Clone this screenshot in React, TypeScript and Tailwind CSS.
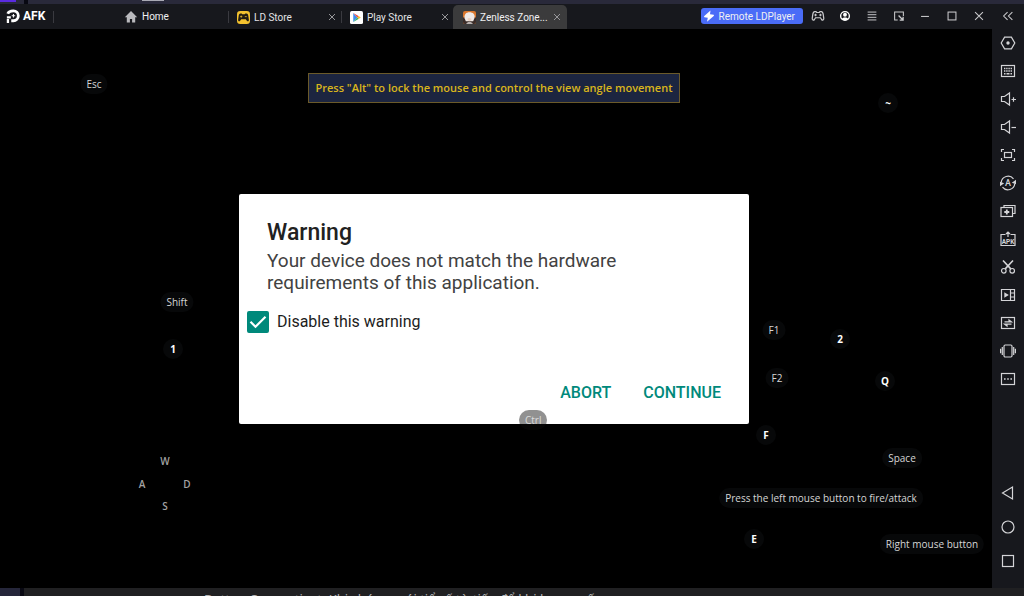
import { useState } from 'react';
import type { ReactNode } from 'react';

type MappedKey = { label: string; x: number; y: number; kind: 'letter' | 'word' | 'move' };

// Key map is authored against this canvas size
const CANVAS_W = 992;
const CANVAS_H = 559;

const KEYS: MappedKey[] = [
  { label: 'Esc', x: 94, y: 55, kind: 'word' },
  { label: '~', x: 888, y: 74, kind: 'letter' },
  { label: 'Shift', x: 177, y: 273, kind: 'word' },
  { label: '1', x: 173, y: 320, kind: 'letter' },
  { label: 'F1', x: 774, y: 301, kind: 'word' },
  { label: '2', x: 840, y: 310, kind: 'letter' },
  { label: 'F2', x: 777, y: 349, kind: 'word' },
  { label: 'Q', x: 885, y: 352, kind: 'letter' },
  { label: 'F', x: 766, y: 406, kind: 'letter' },
  { label: 'Space', x: 902, y: 429, kind: 'word' },
  { label: 'Press the left mouse button to fire/attack', x: 821, y: 469, kind: 'word' },
  { label: 'E', x: 754, y: 510, kind: 'letter' },
  { label: 'Right mouse button', x: 932, y: 515, kind: 'word' },
  { label: 'W', x: 165, y: 432, kind: 'move' },
  { label: 'A', x: 142, y: 455, kind: 'move' },
  { label: 'D', x: 187, y: 455, kind: 'move' },
  { label: 'S', x: 165, y: 477, kind: 'move' },
];

const KEY_STYLES: Record<MappedKey['kind'], string> = {
  letter: 'min-w-5 bg-[#070809] font-bold text-white',
  word: 'px-1.5 bg-[#070809] text-[#d6d6d6]',
  move: 'font-semibold text-[#a3a3a3]',
};

function Icon({ children, className = 'size-4' }: { children: ReactNode; className?: string }) {
  return (
    <svg viewBox="0 0 16 16" fill="none" stroke="currentColor" strokeWidth={1.2} className={className} aria-hidden="true">
      {children}
    </svg>
  );
}

const SPEAKER = 'M1.5 5.5h3L9.5 2v12L4.5 10.5h-3z';

const TOOLS: { name: string; icon: ReactNode }[] = [
  {
    name: 'Settings',
    icon: (
      <>
        <path d="M4.6 2.2h6.8L14.8 8l-3.4 5.8H4.6L1.2 8z" />
        <circle cx="8" cy="8" r="1.7" fill="currentColor" stroke="none" />
      </>
    ),
  },
  {
    name: 'Keyboard mapping',
    icon: (
      <>
        <rect x="1.5" y="2.5" width="13" height="11" />
        <path d="M4 5.5h8M4 8h8" strokeWidth="1.5" strokeDasharray="1.4 0.8" />
        <path d="M4 10.8h1.5M6.5 10.8h3M10.5 10.8H12" strokeWidth="1.4" />
      </>
    ),
  },
  { name: 'Volume up', icon: <><path d={SPEAKER} /><path d="M11.5 8.5H16M13.5 6.3v4.4" /></> },
  { name: 'Volume down', icon: <><path d={SPEAKER} /><path d="M11.5 8.5H16" /></> },
  {
    name: 'Full screen',
    icon: (
      <>
        <path d="M1.5 5V2.5H4M12 2.5h2.5V5M14.5 11v2.5H12M4 13.5H1.5V11" />
        <rect x="4.5" y="5.5" width="7" height="5" />
      </>
    ),
  },
  {
    name: 'Auto rotate',
    icon: (
      <>
        <path d="M1.2 7.5A6.9 6.9 0 0 1 13.5 3.9M14.8 8.5A6.9 6.9 0 0 1 2.5 12.1" />
        <path d="M16 4.8v4.4l-4.2-1.4zM0 11.200V6.800l4.200 1.400z" fill="currentColor" stroke="none" />
        <text x="8" y="11" textAnchor="middle" fontSize="9" fontWeight="500" fill="currentColor" stroke="none">
          A
        </text>
      </>
    ),
  },
  {
    name: 'Multi instance',
    icon: (
      <>
        <path d="M4 4V2.5h11v8h-2" />
        <rect x="1" y="4.5" width="11.5" height="9" />
        <path d="M6.8 6.5v5M4.3 9h5" strokeWidth="1.8" />
      </>
    ),
  },
  {
    name: 'Install APK',
    icon: (
      <>
        <path d="M5.5 3.5H1v11h14v-11h-4.5" />
        <path d="M8 6V1.5M6 3l2-2 2 2" />
        <text x="8" y="12.8" textAnchor="middle" fontSize="6.5" fontWeight="700" fill="currentColor" stroke="none">
          APK
        </text>
      </>
    ),
  },
  {
    name: 'Screenshot',
    icon: (
      <>
        <circle cx="3.8" cy="11.8" r="2.3" />
        <circle cx="12.2" cy="11.8" r="2.3" />
        <path d="M3 1.5l7.8 8.4M13 1.5 5.2 9.9" strokeWidth="1.6" />
      </>
    ),
  },
  {
    name: 'Video recorder',
    icon: (
      <>
        <path d="M1.5 2.5h13v11h-13zM10.5 2.5v11M10.5 6h4M10.5 10h4" />
        <path d="M4.3 5.3v5.4L8.8 8z" fill="currentColor" stroke="none" />
      </>
    ),
  },
  {
    name: 'Synchronizer',
    icon: (
      <>
        <rect x="1.5" y="2.5" width="13" height="11" />
        <path d="M4.5 6.8h7L9 4.9v1.9M11.5 9.2h-7L7 11.1V9.2" fill="currentColor" />
      </>
    ),
  },
  {
    name: 'Shake',
    icon: (
      <>
        <rect x="4" y="2" width="8" height="12" rx="1.2" />
        <path d="M2.3 4v8M13.7 4v8M.6 5.8v4.4M15.4 5.8v4.4" />
      </>
    ),
  },
  {
    name: 'More',
    icon: (
      <>
        <rect x="1.5" y="2.5" width="13" height="11" />
        <path d="M4 8h1.6M7.2 8h1.6M10.4 8H12" strokeWidth="1.6" />
      </>
    ),
  },
];

const NAV: { name: string; icon: ReactNode }[] = [
  { name: 'Back', icon: <path d="M12.5 2v12L2.5 8z" /> },
  { name: 'Home screen', icon: <circle cx="8" cy="8" r="6" /> },
  { name: 'Recent apps', icon: <rect x="2.5" y="2.5" width="11" height="11" /> },
];

const PAD_BODY =
  'M4.2 3h1.6l.7 1h3l.7-1h1.6c1.3 0 1.9 1 2.2 3.5l.6 4.2c.2 1.8-1.4 2.7-2.5 1.3L10.8 10H5.2L3.9 12C2.8 13.4 1.2 12.5 1.4 10.7L2 6.5C2.3 4 2.9 3 4.2 3z';

const WINDOW_BUTTONS: { name: string; icon: ReactNode }[] = [
  {
    name: 'Gamepad',
    icon: (
      <>
        <path d={PAD_BODY} strokeWidth="1.4" />
        <path d="M5.2 5.4v3M3.7 6.9h3M9.3 6.9h3M10.8 5.4v3" />
      </>
    ),
  },
  {
    name: 'Account',
    icon: (
      <>
        <circle cx="8" cy="8" r="5" strokeWidth="1.6" stroke="#fff" />
        <circle cx="8" cy="6.6" r="2.2" fill="#fff" stroke="none" />
        <path d="M4.2 11.4c.8-2.4 6.8-2.4 7.6 0-2 2-5.6 2-7.6 0z" fill="#fff" stroke="none" />
      </>
    ),
  },
  { name: 'Menu', icon: <path d="M3 3.5h10M3 6.5h10M3 9.5h10M3 12.5h10" strokeWidth="1.1" /> },
  {
    name: 'Mini window',
    icon: (
      <>
        <path d="M6.5 12.5H3v-9h10V8" />
        <path d="M7.5 7.5l5 5M12.7 8.8v3.9H8.8" strokeWidth="1.5" />
      </>
    ),
  },
  { name: 'Minimize', icon: <path d="M3.5 8.5h9" /> },
  { name: 'Maximize', icon: <rect x="3.5" y="3.5" width="9" height="9" /> },
  { name: 'Close', icon: <path d="M3.5 3.5l9 9M12.5 3.5l-9 9" /> },
];

function HomeIcon() {
  return (
    <svg viewBox="0 0 14 14" className="size-3.5" fill="#b9b9bd" aria-hidden="true">
      <path d="M7 1 .8 7.3h2v5.2h3.1V9h2.2v3.5h3.1V7.3h2z" />
    </svg>
  );
}

function LdStoreIcon() {
  return (
    <svg viewBox="0 0 16 16" className="size-[13px]" aria-hidden="true">
      <rect width="16" height="16" rx="4" fill="#f4c22f" />
      <path d={PAD_BODY} fill="#221c12" />
      <path d="M5.2 5.6v2.6M3.9 6.9h2.6M9.6 6.9H12" stroke="#f4c22f" strokeWidth="0.9" />
    </svg>
  );
}

function PlayStoreIcon() {
  return (
    <svg viewBox="0 0 16 16" className="size-[13px]" aria-hidden="true">
      <rect width="16" height="16" rx="2" fill="#fff" />
      <path d="M4 2.5v11L9 8z" fill="#3f8ff0" />
      <path d="M4 2.5l7 4L9 8z" fill="#e94a45" />
      <path d="M4 13.5l7-4L9 8z" fill="#30b367" />
      <path d="M10.6 6.3 13.3 8l-2.7 1.7L9 8z" fill="#f6bd2c" />
    </svg>
  );
}

function ZenlessIcon() {
  return (
    <svg viewBox="0 0 16 16" className="size-[13px]" aria-hidden="true">
      <rect width="16" height="16" rx="2.5" fill="#d9762c" />
      <path d="M0 8h16v5.5a2.5 2.5 0 0 1-2.5 2.5h-11A2.5 2.5 0 0 1 0 13.5z" fill="#3a2c29" />
      <path d="M2 9C1 4 4 1.5 8 1.5S15.500 4 14 9l-1.500 3.500h-9z" fill="#efe9e6" />
      <path d="M5.500 9.500l1.700-1 1.600.5 1.700.5-.6 1.800L8 12.500l-2-1.200z" fill="#ecd0c0" />
      <path d="M4 16c.5-2 2-2.500 4-2.500s3.500.5 4 2.500z" fill="#b9b2b0" />
    </svg>
  );
}

function Tab({ label, icon, active = false }: { label: string; icon: ReactNode; active?: boolean }) {
  return (
    <div
      className={`flex shrink-0 items-center ${
        active ? '-ml-0.5 w-[114px] rounded-t-[5px] bg-[#3b3b3c] pl-2.5' : 'w-[113px] pl-2 text-[#e3e3e5]'
      }`}
    >
      <button className="flex flex-1 items-center gap-1 whitespace-nowrap">
        {icon}
        {label}
      </button>
      <button aria-label={`Close ${label}`} className="mr-1 text-[#9a9a9d]">
        <Icon className="size-3">
          <path d="M4 4l8 8M12 4l-8 8" strokeWidth="1.3" />
        </Icon>
      </button>
    </div>
  );
}

function Divider() {
  return <span className="-ml-px h-3 w-px self-center bg-[#3a3a40]" />;
}

function TitleBar() {
  return (
    <header className="flex h-[25px] shrink-0 bg-[#17181d] text-[10px] text-[#f0f0f2]">
      <div className="flex w-[54px] shrink-0 items-center gap-[3px] pb-px pl-1.5 text-xs font-bold text-white">
        <svg viewBox="0 0 16 16" className="size-3.5" fill="none" stroke="#fff" aria-hidden="true">
          <path d="M2 5.5C3 3 5.5 2.2 8.5 2.2a5.6 5.6 0 0 1 0 11.2H6" strokeWidth="3.2" />
          <path d="M1 9.5h4.5M2.2 11.5V16" strokeWidth="2.6" />
          <path d="M6.5 7.8h4M8.5 5.8v4" strokeWidth="1.2" />
        </svg>
        AFK
      </div>
      <Divider />
      <button className="flex w-[175px] shrink-0 items-center gap-1 pl-[70px]">
        <HomeIcon />
        Home
      </button>
      <Divider />
      <div className="flex pt-px">
        <Tab label="LD Store" icon={<LdStoreIcon />} />
        <Divider />
        <Tab label="Play Store" icon={<PlayStoreIcon />} />
        <Tab label="Zenless Zone..." icon={<ZenlessIcon />} active />
      </div>
      <div className="ml-auto flex items-center pb-px">
        <button className="mr-0.5 flex h-4 items-center gap-1 rounded-[3px] bg-[#4a6cf7] pr-2 pl-0.5 whitespace-nowrap">
          <svg viewBox="0 0 12 12" className="size-3" fill="#fff" aria-hidden="true">
            <path d="M7.5.5 1 6.2l.3 1 3.5.6-.8 4 7-6-.3-1-3.700-.5z" />
          </svg>
          Remote LDPlayer
        </button>
        <div className="flex w-[187px]">
          {WINDOW_BUTTONS.map((b) => (
            <button key={b.name} aria-label={b.name} className="flex flex-1 justify-center text-[#c9c9cc]">
              <Icon className="size-3.5">{b.icon}</Icon>
            </button>
          ))}
        </div>
        <button aria-label="Collapse sidebar" className="flex w-8 justify-center text-[#c9c9cc]">
          <Icon className="size-3.5">
            <path d="M7.5 3.5 3 8l4.5 4.5M13 3.5 8.5 8l4.5 4.5" />
          </Icon>
        </button>
      </div>
    </header>
  );
}

function Sidebar() {
  return (
    <aside className="flex w-8 shrink-0 flex-col bg-[#17181d] pb-2.5 text-[#d4d4d7]">
      {TOOLS.map((t) => (
        <button key={t.name} aria-label={t.name} className="flex h-7 items-center justify-center">
          <Icon>{t.icon}</Icon>
        </button>
      ))}
      <div className="mt-auto flex flex-col">
        {NAV.map((n) => (
          <button key={n.name} aria-label={n.name} className="flex h-[34px] items-center justify-center">
            <Icon>{n.icon}</Icon>
          </button>
        ))}
      </div>
    </aside>
  );
}

function WarningDialog() {
  const [disabled, setDisabled] = useState(true);

  return (
    <section
      role="dialog"
      aria-labelledby="warning-title"
      className="relative flex min-h-[230px] w-[510px] flex-col rounded-[2px] bg-white pt-[25px] pb-[15px]"
    >
      <h1 id="warning-title" className="px-7 text-[23px] leading-7 font-medium text-[#212121]">
        Warning
      </h1>
      <p className="mt-[3px] pr-24 pl-7 text-[19px] leading-[22px] text-[#424242]">
        Your device does not match the hardware requirements of this application.
      </p>
      <label className="mt-4 flex items-center gap-2 self-start pl-2 text-base leading-6 text-[#1d1d1d]">
        <span className="grid size-[22px]">
          <input
            type="checkbox"
            checked={disabled}
            onChange={(e) => setDisabled(e.target.checked)}
            className="col-start-1 row-start-1 appearance-none rounded-[2px] border-2 border-[#00897b] checked:bg-[#00897b]"
          />
          {disabled && (
            <svg viewBox="0 0 22 22" className="pointer-events-none col-start-1 row-start-1" fill="none" stroke="#fff" strokeWidth="2.2" aria-hidden="true">
              <path d="M3.5 10.8l5 5 10-10" />
            </svg>
          )}
        </span>
        Disable this warning
      </label>
      <div className="mt-auto flex justify-end gap-8 pr-7 text-base leading-8 font-medium text-[#00897b]">
        <button>ABORT</button>
        <button>CONTINUE</button>
      </div>
      {/* Mapped key that sits over the dialog's bottom edge */}
      <kbd className="absolute top-[216px] left-[280px] rounded-full bg-[#0a0b0c]/45 px-1.5 font-['Open_Sans',sans-serif] text-[10px] leading-5 text-[#dcdcdc]">
        Ctrl
      </kbd>
    </section>
  );
}

function GameCanvas() {
  return (
    <main className="relative flex min-w-0 flex-1 items-center justify-center bg-black pr-1">
      <div className="absolute inset-x-0 top-11 flex justify-center pr-1">
        <p className="border border-[#6b5a2a] bg-[#1c2540] px-1.5 font-['Open_Sans',sans-serif] text-[11px] leading-7 font-semibold whitespace-nowrap text-[#d9b51c]">
          Press "Alt" to lock the mouse and control the view angle movement
        </p>
      </div>
      <WarningDialog />
      {KEYS.map((k) => (
        <kbd
          key={k.label}
          className={`absolute -translate-x-1/2 -translate-y-1/2 rounded-full text-center font-['Open_Sans',sans-serif] text-[10px] leading-5 whitespace-nowrap ${KEY_STYLES[k.kind]}`}
          style={{ left: `${(k.x / CANVAS_W) * 100}%`, top: `${(k.y / CANVAS_H) * 100}%` }}
        >
          {k.label}
        </kbd>
      ))}
    </main>
  );
}

export default function App() {
  return (
    <div className="flex h-screen flex-col overflow-hidden bg-black font-[Roboto,sans-serif]">
      {/* Desktop behind the emulator window */}
      <div className="flex h-1 shrink-0 bg-[#29293a]">
        <span className="h-0.5 w-4 bg-[#5a2be0]" />
        <span className="ml-2 w-1 bg-[#080812]" />
        <span className="ml-[114px] h-px w-[22px] bg-[#a9a9b4]" />
      </div>
      <TitleBar />
      <div className="flex min-h-0 flex-1">
        <GameCanvas />
        <Sidebar />
      </div>
      <footer className="flex h-2 shrink-0 overflow-hidden bg-[#202022]">
        <span className="w-5 bg-[#25263a]" />
        <span className="w-1 bg-[#080812]" />
        <p className="ml-[180px] pt-[3px] font-['Noto_Sans',sans-serif] text-[13px] leading-4 whitespace-nowrap text-[#b5b5b5]">
          Button Connecticut. Khi chúng mới tiể cấ từ tiếp để khi bạn muốn
        </p>
      </footer>
    </div>
  );
}
